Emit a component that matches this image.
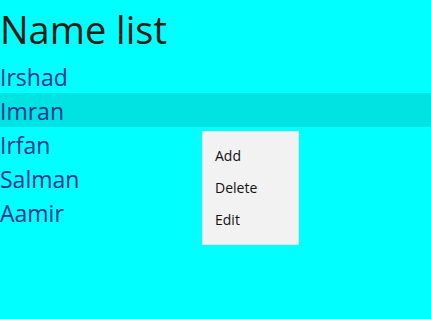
export default function App() {
  const names = ["Irshad", "Imran", "Irfan", "Salman", "Aamir"];
  return (
    <div className="relative w-[431px] h-[319px] bg-[#00ffff] overflow-hidden font-['Open_Sans',sans-serif]">
      <h1 className="h-[59px] pt-[4px] text-[38px] leading-[50px] text-[#2e1a14]">Name list</h1>
      <ul>
        {names.map((n) => (
          <li
            key={n}
            className={
              "h-[34px] pt-[2px] leading-[32px] text-[23px] text-[#15358e] " + (n === "Imran" ? "bg-[#00e3e3]" : "")
            }
          >
            {n}
          </li>
        ))}
      </ul>

      {/* context menu */}
      <div className="absolute left-[202px] top-[131px] w-[97px] py-[8px] bg-[#f2f2f2] border border-[#e0e0e0] text-[14px] text-[#111]">
        <div className="h-[32px] leading-[32px] pl-[12px]">Add</div>
        <div className="h-[32px] leading-[32px] pl-[12px]">Delete</div>
        <div className="h-[32px] leading-[32px] pl-[12px]">Edit</div>
      </div>
    </div>
  );
}
